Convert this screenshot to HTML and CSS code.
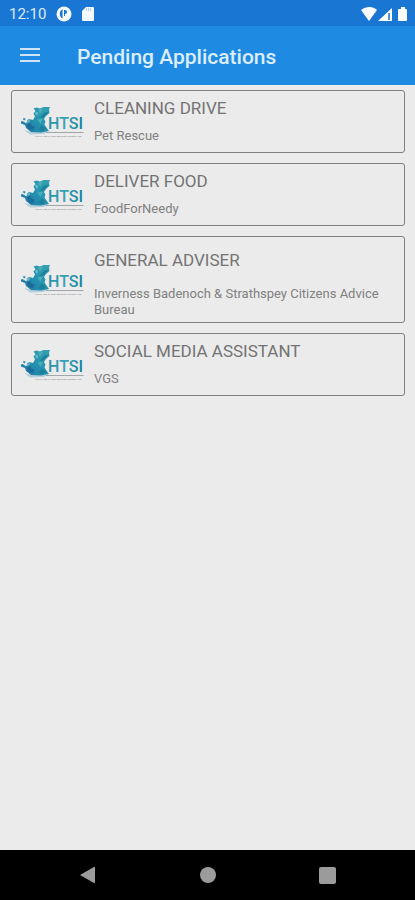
FILE: index.html
```html
<!DOCTYPE html>
<html lang="en">
<head>
<meta charset="utf-8">
<meta name="viewport" content="width=device-width, initial-scale=1">
<title>Pending Applications</title>
<link rel="stylesheet" href="styles.css">
</head>
<body>
<svg class="defs" aria-hidden="true">
  <defs>
    <linearGradient id="teal" x1="0" y1="1" x2="1" y2="0">
      <stop offset="0" stop-color="#1f74a3"/>
      <stop offset="0.5" stop-color="#2592b0"/>
      <stop offset="1" stop-color="#35a2b0"/>
    </linearGradient>
    <linearGradient id="letters" x1="0" y1="0" x2="1" y2="0">
      <stop offset="0" stop-color="#2390aa"/>
      <stop offset="0.5" stop-color="#3ba3b4"/>
      <stop offset="1" stop-color="#147f9c"/>
    </linearGradient>
    <symbol id="logo" viewBox="0 0 128 72">
      <path fill="#b4cfd9" d="M8 52L24 56L56 55L48 60L20 61Z"/>
      <path fill="url(#teal)" d="M27 9L33 7L40 9L47 6L60 6L58 11L59 18L52 24L48 30L51 35L49 41L53 47L58 54L42 57L22 56L12 48L10 42L2 39L2 35L5 34L13 39L14 33L18 30L26 32L30 25L27 19L31 14Z"/>
      <path fill="#1d6b9b" d="M13 41L20 38L23 43L29 45L26 52L18 51Z"/>
      <path fill="#70bdc9" d="M14 34L20 31L19 36L15 38ZM31 15L36 17L35 24L31 20Z"/>
      <path fill="#48aebb" d="M36 11L47 9L40 20ZM35 31L46 29L41 40Z"/>
      <path fill="#1b8098" d="M49 17L58 15L51 23L45 28L40 27ZM43 43L53 49L45 55L37 52Z"/>
      <path fill="#2489b0" d="M7 28L11 29L10 33L6 31Z"/>
      <text class="logo-name" x="56" y="50" fill="url(#letters)">HTSI</text>
      <path fill="#a0a6a9" d="M52 56H127V58H52Z"/>
      <text class="logo-tag" x="29" y="66">HIGHLAND THIRD SECTOR INTERFACE</text>
    </symbol>
  </defs>
</svg>
<div class="screen">
  <div class="status">
    <span class="clock">12:10</span>
    <svg class="app-icon" width="16" height="16" viewBox="0 0 16 16"><circle cx="8" cy="8" r="7.5" fill="#f4f9fe"/><path d="M6.500 3.500C3 4 3 11 6.500 12.500ZM8 4v6h1V8a2 2 0 1 0 0-4z" fill="#1976d2"/></svg>
    <svg class="card-icon" width="12" height="14" viewBox="0 0 12 14"><path d="M4 0H11a1 1 0 0 1 1 1V13a1 1 0 0 1-1 1H1a1 1 0 0 1-1-1V4z" fill="#f4f9fe"/><path d="M4.500 1v3M6.500 1v3M8.500 1v3" stroke="#b5cfed"/></svg>
    <svg class="signals" width="48" height="16" viewBox="0 0 48 16"><path fill="#fff" d="M0 4C5 0 12 0 16 4L8 15ZM17 15L31 2V15ZM38 3H40V1H44V3H45Q46 3 46 4V14Q46 15 45 15H38Q37 15 37 14V4Q37 3 38 3Z"/><path fill="#4b94dd" d="M27 7H29V14H27Z"/></svg>
  </div>
  <header class="bar">
    <button class="menu" type="button" aria-label="Menu"><svg width="20" height="14" viewBox="0 0 20 14"><path d="M0 1H20M0 7H20M0 13H20" stroke="#cfe4f9" stroke-width="2"/></svg></button>
    <h1>Pending Applications</h1>
  </header>
  <main class="list">
    <article class="item"><svg class="logo" role="img" aria-label="HTSI"><use href="#logo"/></svg><div class="text"><h2>CLEANING DRIVE</h2><p>Pet Rescue</p></div></article>
    <article class="item"><svg class="logo" role="img" aria-label="HTSI"><use href="#logo"/></svg><div class="text"><h2>DELIVER FOOD</h2><p>FoodForNeedy</p></div></article>
    <article class="item tall"><svg class="logo" role="img" aria-label="HTSI"><use href="#logo"/></svg><div class="text"><h2>GENERAL ADVISER</h2><p>Inverness Badenoch &amp; Strathspey Citizens Advice Bureau</p></div></article>
    <article class="item"><svg class="logo" role="img" aria-label="HTSI"><use href="#logo"/></svg><div class="text"><h2>SOCIAL MEDIA ASSISTANT</h2><p>VGS</p></div></article>
  </main>
  <nav class="nav">
    <button type="button" aria-label="Back"><svg width="18" height="18" viewBox="0 0 18 18"><path d="M1 9L15 1Q16 0 16 2V16Q16 18 15 17Z" fill="#9b9b9b"/></svg></button>
    <button type="button" aria-label="Home"><svg width="18" height="18" viewBox="0 0 18 18"><circle cx="9" cy="9" r="8" fill="#9b9b9b"/></svg></button>
    <button type="button" aria-label="Recent apps"><svg width="18" height="18" viewBox="0 0 18 18"><rect x="1" y="1" width="17" height="17" rx="2" fill="#9b9b9b"/></svg></button>
  </nav>
</div>
</body>
</html>
```
FILE: styles.css
```css
* {
  box-sizing: border-box;
}

body {
  margin: 0;
  font-family: Roboto, "Liberation Sans", sans-serif;
  background: #ebebeb;
}

h1,
h2,
p {
  margin: 0;
  font-weight: 400;
}

button {
  display: flex;
  padding: 0;
  border: 0;
  background: none;
}

.defs {
  position: absolute;
  width: 0;
  height: 0;
}

.screen {
  display: flex;
  flex-direction: column;
  min-height: 100vh;
}

.status {
  display: flex;
  align-items: center;
  height: 26px;
  padding: 2px 6px 0 9px;
  background: #1976d2;
}

.clock {
  font-size: 15px;
  color: #dcebfa;
}

.app-icon {
  margin-left: 10px;
}

.card-icon {
  margin-left: 10px;
}

.signals {
  margin-left: auto;
}

.bar {
  display: flex;
  align-items: center;
  gap: 37px;
  height: 59px;
  padding: 2px 20px 0;
  background: #1e8ae2;
}

.bar h1 {
  font-size: 21px;
  font-weight: 500;
  line-height: 24px;
  color: #dcedfc;
}

.menu {
  margin-top: -4px;
}

.list {
  display: flex;
  flex: 1;
  flex-direction: column;
  gap: 10px;
  padding: 5px 10px 5px 11px;
}

.item {
  display: flex;
  align-items: center;
  gap: 10px;
  min-height: 63px;
  padding: 0 9px 0 8px;
  border: 1px solid #808080;
  border-radius: 3px;
}

.logo {
  flex: none;
  width: 64px;
  height: 36px;
}

.logo-name {
  font-size: 32px;
  font-weight: 500;
}

.logo-tag {
  font-family: "Liberation Sans", sans-serif;
  font-size: 5px;
  fill: #7b8082;
}

.text {
  display: flex;
  flex-direction: column;
  gap: 10px;
  padding-bottom: 2px;
}

.text h2 {
  font-size: 17px;
  line-height: 20px;
  color: #737373;
}

.text p {
  font-size: 13px;
  line-height: 16px;
  color: #808080;
}

.tall {
  min-height: 87px;
}

.tall .text {
  gap: 16px;
  padding: 8px 0 0;
}

.nav {
  display: flex;
  justify-content: space-between;
  align-items: center;
  height: 50px;
  padding: 0 79px;
  background: #000;
}
```
